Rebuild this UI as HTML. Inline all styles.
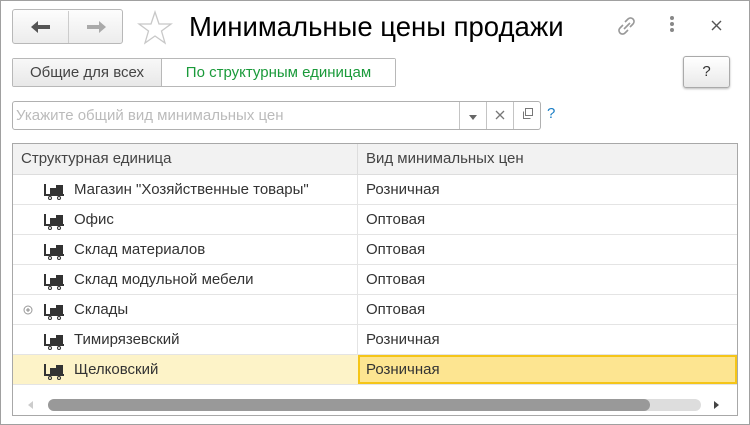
<!DOCTYPE html>
<html><head><meta charset="utf-8"><style>
*{box-sizing:border-box;margin:0;padding:0}
body{width:750px;height:425px;background:#fff;font-family:"Liberation Sans",Arial,sans-serif;position:relative;overflow:hidden;color:#333}
.win{position:absolute;left:0;top:0;width:750px;height:425px;border:1px solid #a0a0a0}
.abs{position:absolute}
.nav{left:12px;top:9px;width:111px;height:35px;border:1px solid #b8b8b8;border-radius:3px;background:linear-gradient(#fdfdfd,#ececec)}
.nav .sep{position:absolute;left:55px;top:1px;width:1px;height:32px;background:#ccc}
.title{left:189px;top:11px;font-size:27.5px;color:#000;white-space:nowrap}
.tabs{left:12px;top:58px;height:29px;border:1px solid #b8b8b8;border-radius:2px;display:flex;font-size:15px}
.tab1{width:149px;background:linear-gradient(#f8f8f8,#e8e8e8);border-right:1px solid #b8b8b8;text-align:center;line-height:27px;color:#444}
.tab2{width:233px;text-align:center;line-height:27px;color:#1a9a3a;background:#fff}
.qbtn{left:683px;top:56px;width:47px;height:32px;border:1px solid #aaa;border-radius:3px;background:linear-gradient(#fff,#e9e9e9);box-shadow:0 1px 2px #bbb;text-align:center;line-height:29px;font-size:15px;color:#333}
.inp{left:12px;top:101px;width:529px;height:29px;border:1px solid #b0b0b0;border-radius:3px}
.inp span{position:absolute;left:3px;top:5px;font-size:15px;color:#bbb}
.inp .b{position:absolute;top:0;width:27px;height:27px;border-left:1px solid #c4c4c4;text-align:center;line-height:27px;color:#777}
.grid{left:12px;top:143px;width:726px;height:273px;border:1px solid #a8a8a8}
.hdr{position:absolute;left:0;top:0;width:724px;height:31px;background:#f2f2f2;border-bottom:1px solid #ddd;font-size:15px;color:#444}
.row{position:absolute;left:0;width:724px;height:30px;border-bottom:1px solid #e4e4e4;font-size:15px;color:#333}
.c1{position:absolute;left:61px;top:6px;white-space:nowrap}
.c2{position:absolute;left:353px;top:6px}
.ic{position:absolute;left:31px;top:8px}
</style></head><body>
<div class="win"></div>
<div class="abs nav"><div class="sep"></div>
<svg class="abs" style="left:17px;top:10px" width="22" height="14"><path d="M1 7L8 1V5H20V9H8V13Z" fill="#555"/></svg>
<svg class="abs" style="left:72px;top:10px" width="22" height="14"><path d="M21 7L14 1V5H2V9H14V13Z" fill="#aaa"/></svg>
</div>
<svg class="abs" style="left:137px;top:10px" width="36" height="35"><path d="M18 2L22 14H34L24.5 21L28 33L18 26L8 33L11.5 21L2 14H14Z" fill="none" stroke="#c8c8c8" stroke-width="1.3"/></svg>
<div class="abs title">Минимальные цены продажи</div>
<svg class="abs" style="left:615px;top:14px" width="24" height="24"><g fill="none" stroke="#999" stroke-width="1.6"><path d="M10 8l3-3a3.5 3.5 0 015 5l-3 3"/><path d="M13 16l-3 3a3.5 3.5 0 01-5-5l3-3"/><path d="M9 15l6-6"/></g></svg>
<svg class="abs" style="left:669px;top:15px" width="6" height="20"><circle cx="3" cy="3" r="2" fill="#888"/><circle cx="3" cy="9" r="2" fill="#888"/><circle cx="3" cy="15" r="2" fill="#888"/></svg>
<svg class="abs" style="left:711px;top:20px" width="11" height="11"><path d="M1 1L10 10M10 1L1 10" stroke="#555" stroke-width="1.4"/></svg>
<div class="abs tabs"><div class="tab1">Общие для всех</div><div class="tab2">По структурным единицам</div></div>
<div class="abs qbtn">?</div>
<div class="abs inp"><span>Укажите общий вид минимальных цен</span>
<div class="b" style="left:446px"><svg width="8" height="5"><path d="M0 0H8L4 5Z" fill="#666"/></svg></div>
<div class="b" style="left:473px"><svg width="10" height="10"><path d="M1 1L9 9M9 1L1 9" stroke="#777" stroke-width="1.3"/></svg></div>
<div class="b" style="left:500px"><svg width="13" height="13"><rect x="4.5" y="1.5" width="7" height="7" fill="none" stroke="#777"/><path d="M2.5 4.5V11.5H9.5" fill="none" stroke="#777"/></svg></div>
</div>
<div class="abs" style="left:547px;top:105px;font-size:15px;color:#1a7dc4">?</div>
<div class="abs grid">
<div class="hdr"><span style="position:absolute;left:8px;top:6px">Структурная единица</span><div style="position:absolute;left:344px;top:0;width:1px;height:31px;background:#ddd"></div><span style="position:absolute;left:353px;top:6px">Вид минимальных цен</span></div>
<div style="position:absolute;left:344px;top:31px;width:1px;height:210px;background:#e4e4e4"></div>
<div class="row" style="top:31px"><svg class="ic" width="22" height="17"><path d="M1 1V12H20" fill="none" stroke="#333" stroke-width="2"/><rect x="6" y="5" width="13" height="6" fill="#333"/><rect x="12" y="2" width="7" height="4" fill="#333"/><circle cx="6" cy="15" r="1.5" fill="none" stroke="#333"/><circle cx="15" cy="15" r="1.5" fill="none" stroke="#333"/></svg><span class="c1">Магазин "Хозяйственные товары"</span><span class="c2">Розничная</span></div>
<div class="row" style="top:61px"><svg class="ic" width="22" height="17"><path d="M1 1V12H20" fill="none" stroke="#333" stroke-width="2"/><rect x="6" y="5" width="13" height="6" fill="#333"/><rect x="12" y="2" width="7" height="4" fill="#333"/><circle cx="6" cy="15" r="1.5" fill="none" stroke="#333"/><circle cx="15" cy="15" r="1.5" fill="none" stroke="#333"/></svg><span class="c1">Офис</span><span class="c2">Оптовая</span></div>
<div class="row" style="top:91px"><svg class="ic" width="22" height="17"><path d="M1 1V12H20" fill="none" stroke="#333" stroke-width="2"/><rect x="6" y="5" width="13" height="6" fill="#333"/><rect x="12" y="2" width="7" height="4" fill="#333"/><circle cx="6" cy="15" r="1.5" fill="none" stroke="#333"/><circle cx="15" cy="15" r="1.5" fill="none" stroke="#333"/></svg><span class="c1">Склад материалов</span><span class="c2">Оптовая</span></div>
<div class="row" style="top:121px"><svg class="ic" width="22" height="17"><path d="M1 1V12H20" fill="none" stroke="#333" stroke-width="2"/><rect x="6" y="5" width="13" height="6" fill="#333"/><rect x="12" y="2" width="7" height="4" fill="#333"/><circle cx="6" cy="15" r="1.5" fill="none" stroke="#333"/><circle cx="15" cy="15" r="1.5" fill="none" stroke="#333"/></svg><span class="c1">Склад модульной мебели</span><span class="c2">Оптовая</span></div>
<div class="row" style="top:151px"><svg style="position:absolute;left:10px;top:10px" width="10" height="10"><circle cx="5" cy="5" r="4" fill="none" stroke="#999"/><path d="M3 5H7M5 3V7" stroke="#888"/></svg><svg class="ic" width="22" height="17"><path d="M1 1V12H20" fill="none" stroke="#333" stroke-width="2"/><rect x="6" y="5" width="13" height="6" fill="#333"/><rect x="12" y="2" width="7" height="4" fill="#333"/><circle cx="6" cy="15" r="1.5" fill="none" stroke="#333"/><circle cx="15" cy="15" r="1.5" fill="none" stroke="#333"/></svg><span class="c1">Склады</span><span class="c2">Оптовая</span></div>
<div class="row" style="top:181px"><svg class="ic" width="22" height="17"><path d="M1 1V12H20" fill="none" stroke="#333" stroke-width="2"/><rect x="6" y="5" width="13" height="6" fill="#333"/><rect x="12" y="2" width="7" height="4" fill="#333"/><circle cx="6" cy="15" r="1.5" fill="none" stroke="#333"/><circle cx="15" cy="15" r="1.5" fill="none" stroke="#333"/></svg><span class="c1">Тимирязевский</span><span class="c2">Розничная</span></div>
<div class="row" style="top:211px;background:#fdf3c8"><svg class="ic" width="22" height="17"><path d="M1 1V12H20" fill="none" stroke="#333" stroke-width="2"/><rect x="6" y="5" width="13" height="6" fill="#333"/><rect x="12" y="2" width="7" height="4" fill="#333"/><circle cx="6" cy="15" r="1.5" fill="none" stroke="#333"/><circle cx="15" cy="15" r="1.5" fill="none" stroke="#333"/></svg><span class="c1">Щелковский</span>
<div style="position:absolute;left:345px;top:0;width:379px;height:29px;background:#fde591;border:2px solid #f5c518"></div><span class="c2">Розничная</span></div>
<svg style="position:absolute;left:15px;top:257px" width="5" height="8"><path d="M5 0V8L0 4Z" fill="#ccc"/></svg>
<div style="position:absolute;left:35px;top:255px;width:653px;height:12px;border-radius:6px;background:#ddd"></div>
<div style="position:absolute;left:35px;top:255px;width:602px;height:12px;border-radius:6px;background:#999"></div>
<svg style="position:absolute;left:701px;top:257px" width="5" height="8"><path d="M0 0V8L5 4Z" fill="#444"/></svg>
</div>
</body></html>
